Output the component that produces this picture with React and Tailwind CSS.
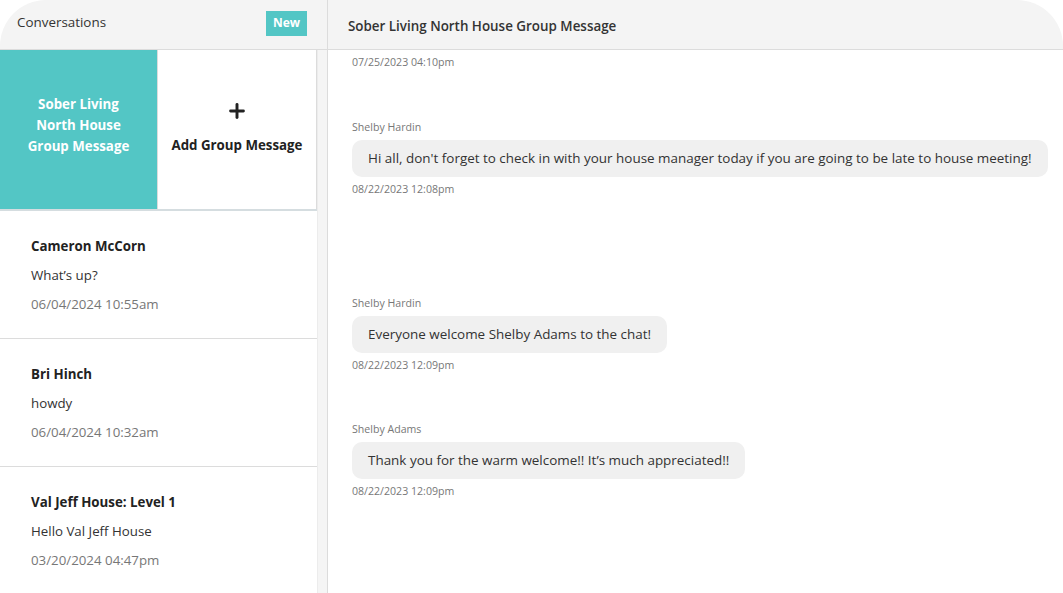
import { Plus } from "lucide-react";

export default function App() {
  const conversations = [
    { name: "Cameron McCorn", msg: "What\u2019s up?", date: "06/04/2024 10:55am" },
    { name: "Bri Hinch", msg: "howdy", date: "06/04/2024 10:32am" },
    { name: "Val Jeff House: Level 1", msg: "Hello Val Jeff House", date: "03/20/2024 04:47pm" },
  ];

  const messages = [
    {
      from: "Shelby Hardin",
      text: "Hi all, don't forget to check in with your house manager today if you are going to be late to house meeting!",
      date: "08/22/2023 12:08pm",
      gap: "mt-[49px]",
    },
    {
      from: "Shelby Hardin",
      text: "Everyone welcome Shelby Adams to the chat!",
      date: "08/22/2023 12:09pm",
      gap: "mt-[98px]",
    },
    {
      from: "Shelby Adams",
      text: "Thank you for the warm welcome!! It\u2019s much appreciated!!",
      date: "08/22/2023 12:09pm",
      gap: "mt-[48px]",
    },
  ];

  return (
    <div className="w-[1063px] h-[593px] flex bg-white rounded-t-[46px] overflow-hidden font-['Open_Sans',sans-serif] text-[#333]">
      {/* Sidebar */}
      <div className="w-[328px] flex flex-col border-r border-[#dcdcdc]">
        <div className="h-[50px] shrink-0 bg-[#f4f4f4] border-b border-[#dcdcdc] flex items-center justify-between pl-[17px] pr-[20px]">
          <span className="text-[13.4px] text-[#333] -mt-[5px]">Conversations</span>
          <button className="h-[25px] w-[41px] bg-[#53c6c5] text-white text-[12px] font-bold -mt-[3px]">
            New
          </button>
        </div>

        <div className="flex flex-1 min-h-0">
          <div className="w-[317px] flex flex-col">
            {/* Group tiles */}
            <div className="h-[161px] shrink-0 grid grid-cols-[157px_1fr] border-b-2 border-[#d5dde0]">
              <div className="bg-[#53c6c5] flex items-center justify-center text-center text-white font-bold text-[13.3px] leading-[21px] px-4 pb-[9px]">
                Sober Living
                <br />
                North House
                <br />
                Group Message
              </div>
              <div className="border-l border-r border-[#dcdcdc] flex flex-col items-center justify-center pb-[3px]">
                <Plus size={22} strokeWidth={3.2} className="text-[#222]" />
                <span className="mt-[14px] text-[13.3px] font-bold text-[#222]">Add Group Message</span>
              </div>
            </div>

            {/* Conversation list */}
            {conversations.map((c, i) => (
              <div key={i} className="shrink-0 h-[128px] border-b border-[#dcdcdc] pl-[31px] pt-[21px] flex flex-col">
                <div className="h-[29px] flex items-center text-[13.3px] font-bold text-[#222]">{c.name}</div>
                <div className="h-[29px] flex items-center text-[13.3px] text-[#333]">{c.msg}</div>
                <div className="h-[29px] flex items-center text-[13.3px] text-[#777]">{c.date}</div>
              </div>
            ))}
          </div>
          <div className="flex-1 bg-[#f5f5f5] border-l border-[#ececec]" />
        </div>
      </div>

      {/* Chat */}
      <div className="flex-1 flex flex-col">
        <div className="h-[50px] shrink-0 bg-[#f4f4f4] border-b border-[#dcdcdc] flex items-center pl-[20px]">
          <span className="text-[13.4px] font-semibold text-[#333] mt-[3px]">Sober Living North House Group Message</span>
        </div>

        <div className="pl-[24px] flex flex-col items-start">
          <div className="mt-[4px] text-[10.6px] leading-[16px] text-[#777]">07/25/2023 04:10pm</div>
          {messages.map((m, i) => (
            <div key={i} className={`${m.gap} flex flex-col items-start`}>
              <div className="text-[10.6px] leading-[16px] text-[#777]">{m.from}</div>
              <div className="mt-[5px] bg-[#f0f0f0] rounded-[10px] px-[16px] py-[8px] text-[13.45px] leading-[21px] text-[#333] whitespace-nowrap">
                {m.text}
              </div>
              <div className="mt-[4px] text-[10.6px] leading-[16px] text-[#777]">{m.date}</div>
            </div>
          ))}
        </div>
      </div>
    </div>
  );
}
